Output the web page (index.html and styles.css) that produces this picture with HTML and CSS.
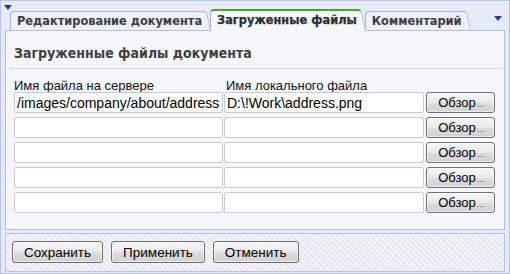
FILE: index.html
```html
<!DOCTYPE html>
<html lang="ru">
<head>
<meta charset="utf-8">
<title>Загруженные файлы</title>
<link rel="stylesheet" href="styles.css">
</head>
<body>
<div class="widget">
  <span class="arrow arrow--corner"></span>
  <div class="tabbar">
    <div class="tab">Редактирование документа</div>
    <div class="tab tab--active">Загруженные файлы</div>
    <div class="tab">Комментарий</div>
    <span class="arrow arrow--menu"></span>
  </div>
  <div class="panel">
    <h2 class="panel-title">Загруженные файлы документа</h2>
    <div class="files-head">
      <div class="label">Имя файла на сервере</div>
      <div class="label label--local">Имя локального файла</div>
    </div>
    <div class="files">
      <input class="field field--server" type="text" value="/images/company/about/address">
      <input class="field field--local" type="text" value="D:\!Work\address.png">
      <button class="btn btn--browse" type="button">Обзор<span class="dots">…</span></button>

      <input class="field field--server" type="text" value="">
      <input class="field field--local" type="text" value="">
      <button class="btn btn--browse" type="button">Обзор<span class="dots">…</span></button>

      <input class="field field--server" type="text" value="">
      <input class="field field--local" type="text" value="">
      <button class="btn btn--browse" type="button">Обзор<span class="dots">…</span></button>

      <input class="field field--server" type="text" value="">
      <input class="field field--local" type="text" value="">
      <button class="btn btn--browse" type="button">Обзор<span class="dots">…</span></button>

      <input class="field field--server" type="text" value="">
      <input class="field field--local" type="text" value="">
      <button class="btn btn--browse" type="button">Обзор<span class="dots">…</span></button>
    </div>
  </div>
  <div class="footer">
    <button class="btn btn--action" type="button">Сохранить</button>
    <button class="btn btn--action" type="button">Применить</button>
    <button class="btn btn--action" type="button">Отменить</button>
  </div>
</div>
</body>
</html>
```
FILE: styles.css
```css
* { box-sizing: border-box; }

html, body {
  margin: 0;
  padding: 0;
  background: #ffffff;
}

.widget {
  position: relative;
  width: 510px;
  height: 274px;
  border: 1px solid #b9c3e3;
  background: #e6e9f6;
  display: flex;
  flex-direction: column;
  padding: 0 4px 1px 4px;
  font-family: "Liberation Sans", Arial, sans-serif;
}

.arrow {
  width: 0;
  height: 0;
  border-left: 4px solid transparent;
  border-right: 4px solid transparent;
  border-top: 5px solid #24418f;
}

.arrow--corner {
  position: absolute;
  left: 3px;
  top: 4px;
}

.arrow--menu {
  margin-left: auto;
  margin-right: 3px;
  align-self: flex-start;
  margin-top: 15px;
}

.tabbar {
  height: 29px;
  display: flex;
  align-items: flex-end;
  padding-left: 5px;
}

.tab {
  position: relative;
  z-index: 0;
  height: 19px;
  padding: 0 2px 0 6px;
  margin-right: 6px;
  background: #eef0f9;
  border: 1px solid #a9b5d9;
  border-right: 0;
  border-bottom: 0;
  border-top-left-radius: 4px;
  font-family: "DejaVu Sans", Verdana, sans-serif;
  font-weight: bold;
  font-size: 11.4px;
  line-height: 18px;
  color: #3d3d3d;
  white-space: nowrap;
}

.tab::after {
  content: "";
  position: absolute;
  z-index: -1;
  top: -1px;
  bottom: 0;
  right: -7px;
  width: 12px;
  background: inherit;
  border: 1px solid #a9b5d9;
  border-left: 0;
  border-bottom: 0;
  border-top-right-radius: 4px;
  transform: skewX(12deg);
  transform-origin: bottom left;
}

.tab--active {
  z-index: 2;
  height: 22px;
  margin-bottom: -1px;
  background: #f5f7fd;
  border-top: 2px solid #46a628;
  line-height: 19px;
  color: #2e2e2e;
  -webkit-text-stroke: 0.25px #2e2e2e;
}

.tab--active::after {
  top: -2px;
  border-top: 2px solid #46a628;
}

.panel {
  flex: 1;
  background: #f5f7fd;
  border: 1px solid #b2bee1;
  padding: 13px 3px 0 3px;
}

.panel-title {
  margin: 0;
  padding: 0 0 6px 5px;
  font-family: "DejaVu Sans Condensed", "DejaVu Sans", Verdana, sans-serif;
  font-stretch: condensed;
  font-weight: bold;
  font-size: 14px;
  line-height: 18px;
  color: #3f3f3f;
  border-bottom: 1px dotted #c6c9d2;
}

.files-head {
  display: grid;
  grid-template-columns: 211px 200px;
  margin-top: 10px;
  padding-left: 5px;
  height: 13px;
}

.label {
  font-size: 13px;
  line-height: 13px;
  color: #111111;
}

.label--local {
  padding-left: 1px;
}

.files {
  display: grid;
  grid-template-columns: 210px 202px 69px;
  grid-auto-rows: 21px;
  row-gap: 4px;
  padding-left: 5px;
}

.field {
  height: 21px;
  margin: 0;
  padding: 0 2px;
  border: 1px solid #cbcbcb;
  border-radius: 2px;
  background: #ffffff;
  font-family: "Liberation Sans", Arial, sans-serif;
  font-size: 14px;
  color: #000000;
  outline: none;
}

.field--server { width: 209px; }
.field--local { width: 200px; }

.btn {
  margin: 0;
  padding: 0;
  height: 21px;
  border: 1px solid #707070;
  border-radius: 3px;
  background: linear-gradient(#f6f6f6, #e9e9e9 50%, #dcdcdc 51%, #d2d2d2);
  box-shadow: inset 0 0 0 1px rgba(255, 255, 255, 0.6);
  font-family: "Liberation Sans", Arial, sans-serif;
  font-size: 13.5px;
  line-height: 19px;
  color: #000000;
}

.btn--browse {
  width: 69px;
  font-size: 13px;
  padding-left: 2px;
}

.dots {
  font-size: 8px;
  margin-left: 1px;
}

.footer {
  margin-top: 3px;
  height: 39px;
  border: 1px solid #b9c3e3;
  background: repeating-linear-gradient(45deg, #f4f5fa 0, #f4f5fa 2px, #e4e7ef 2px, #e4e7ef 4px);
  display: flex;
  align-items: flex-start;
  gap: 8px;
  padding: 7px 0 0 6px;
}

.btn--action {
  height: 22px;
  padding: 0 11px;
}
```
